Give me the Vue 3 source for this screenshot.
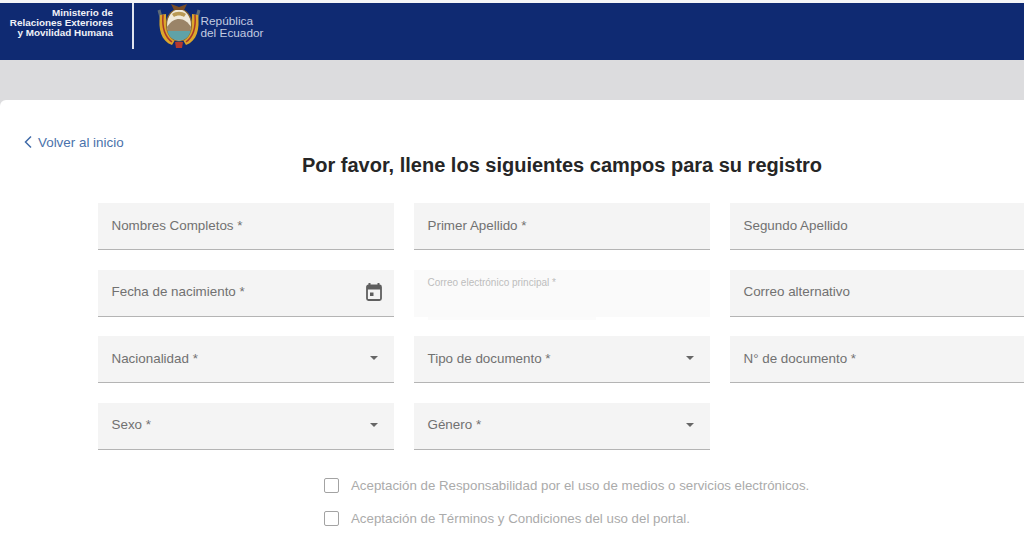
<script setup>
const fields = [
  { label: 'Nombres Completos *' },
  { label: 'Primer Apellido *' },
  { label: 'Segundo Apellido' },
  { label: 'Fecha de nacimiento *', icon: 'date' },
  { label: 'Correo electrónico principal *', disabled: true },
  { label: 'Correo alternativo' },
  { label: 'Nacionalidad *', icon: 'caret' },
  { label: 'Tipo de documento *', icon: 'caret' },
  { label: 'N° de documento *' },
  { label: 'Sexo *', icon: 'caret' },
  { label: 'Género *', icon: 'caret' },
]
const checks = [
  'Aceptación de Responsabilidad por el uso de medios o servicios electrónicos.',
  'Aceptación de Términos y Condiciones del uso del portal.',
]
</script>

<template>
  <div class="page">
    <header class="topbar">
      <div class="ministry">Ministerio de<br />Relaciones Exteriores<br />y Movilidad Humana</div>
      <div class="divider"></div>
      <svg class="crest" width="44" height="50" viewBox="0 0 44 50">
        <path d="M2 9 L6 24 M42 9 L38 24" stroke="#5d6b78" stroke-width="3" fill="none" />
        <path d="M3 14 C1 28 4 40 15 44 L18 39 C11 34 9 24 9 13 Z" fill="#dca72b" />
        <path d="M41 14 C43 28 40 40 29 44 L26 39 C33 34 35 24 35 13 Z" fill="#dca72b" />
        <path d="M6 14 C5 26 8 36 15 41" stroke="#a8352c" stroke-width="1.5" fill="none" />
        <path d="M38 14 C39 26 36 36 29 41" stroke="#a8352c" stroke-width="1.5" fill="none" />
        <ellipse cx="22" cy="24" rx="12.5" ry="16" fill="#efe9da" stroke="#8d6a32" stroke-width="1.2" />
        <path d="M10 26 C14 20 18 18 22 18 C27 18 31 21 34 26 L33 31 H11 Z" fill="#9a8468" />
        <path d="M10.5 30 H33.5 C32 36 28 39.5 22 39.5 C16 39.5 12 36 10.5 30 Z" fill="#5fa2a8" />
        <path d="M15 13 C19 10 25 10 29 13 L27 16 C24 14 20 14 17 16 Z" fill="#b99a55" />
        <path d="M14 3 L22 6 L30 3 L27 9 H17 Z" fill="#7a4d25" />
        <path d="M18 41 H26 L25 47 H19 Z" fill="#b5392f" />
      </svg>
      <div class="republic">República<br />del Ecuador</div>
    </header>

    <div class="band"></div>

    <main class="card">
      <a class="back">
        <svg width="10" height="14" viewBox="0 0 10 14"><path d="M8 1.5 L2.5 7 L8 12.5" fill="none" stroke="#3f6aa8" stroke-width="1.5" /></svg>
        <span>Volver al inicio</span>
      </a>
      <h1>Por favor, llene los siguientes campos para su registro</h1>

      <div class="grid">
        <div v-for="f in fields" :key="f.label" class="field" :class="{ disabled: f.disabled }">
          <span class="label">{{ f.label }}</span>
          <svg v-if="f.icon === 'date'" class="date" width="18" height="20" viewBox="0 0 18 20">
            <path d="M4.5 1 V4 M13.5 1 V4" stroke="#5f5f5f" stroke-width="2" />
            <rect x="2" y="3.5" width="14" height="14.5" rx="1.5" fill="none" stroke="#5f5f5f" stroke-width="1.8" />
            <rect x="2" y="3.5" width="14" height="4" fill="#5f5f5f" />
            <rect x="5" y="10.5" width="3.5" height="3.5" fill="#5f5f5f" />
          </svg>
          <span v-if="f.icon === 'caret'" class="caret"></span>
          <span v-if="f.disabled" class="smudge"></span>
        </div>
      </div>

      <div class="checks">
        <label v-for="c in checks" :key="c" class="check">
          <span class="box"></span>
          <span>{{ c }}</span>
        </label>
      </div>
    </main>
  </div>
</template>

<style>
html, body { margin: 0; overflow: hidden; background: #fff; }
</style>

<style scoped>
.page {
  width: 1024px;
  height: 536px;
  overflow: hidden;
  padding-top: 3px;
  box-sizing: border-box;
  font-family: "Liberation Sans", Arial, sans-serif;
  background: linear-gradient(#f4f5f7 0 3px, #dcdcde 3px);
}
.topbar {
  box-sizing: border-box;
  height: 57px;
  background: #0f2a72;
  display: flex;
  align-items: flex-start;
  color: #fff;
}
.ministry {
  width: 113px;
  margin-top: 5px;
  text-align: right;
  font-size: 9.9px;
  line-height: 10px;
  font-weight: 700;
  color: #f0f2f8;
  white-space: nowrap;
}
.divider { width: 1.5px; height: 46px; margin-left: 19px; background: #dfe4ef; }
.crest { margin-left: 23px; margin-top: -2px; flex: none; }
.republic {
  margin-left: 0;
  margin-top: 12px;
  font-size: 11.8px;
  line-height: 12px;
  color: #c3cbe0;
}
.band { height: 40px; }
.card {
  height: 440px;
  background: #fff;
  border-radius: 6px 0 0 0;
  padding-top: 34px;
  box-sizing: border-box;
}
.back {
  display: flex;
  align-items: center;
  gap: 5px;
  margin-left: 23px;
  height: 16px;
  font-size: 13.4px;
  color: #4a72ab;
}
h1 {
  margin: 0;
  padding-left: 100px;
  height: 30px;
  text-align: center;
  font-size: 20px;
  line-height: 30px;
  font-weight: 700;
  color: #262626;
  white-space: nowrap;
}
.grid {
  display: grid;
  grid-template-columns: repeat(3, 296px);
  column-gap: 20px;
  row-gap: 19.5px;
  margin: 23px 0 0 98px;
  width: 960px;
}
.field {
  box-sizing: border-box;
  height: 47px;
  background: #f4f4f4;
  border-bottom: 1.5px solid #b4b4b4;
  padding: 0 14px 2px 13.5px;
  display: flex;
  align-items: center;
  justify-content: space-between;
  position: relative;
  font-size: 13.4px;
  color: #717171;
}
.field.disabled {
  background: #fafafa;
  border-bottom: none;
  align-items: flex-start;
  padding-top: 7px;
  font-size: 10px;
  color: #bdbdbd;
}
.smudge {
  position: absolute;
  left: 14px;
  top: 47px;
  width: 168px;
  height: 3px;
  background: #fbfbfb;
}
.date { margin-right: -3px; }
.caret {
  width: 0;
  height: 0;
  margin-right: 2px;
  border-left: 4.5px solid transparent;
  border-right: 4.5px solid transparent;
  border-top: 4.5px solid #666;
}
.checks {
  margin: 26px 0 0 324px;
  display: flex;
  flex-direction: column;
  gap: 14.5px;
}
.check {
  display: flex;
  align-items: center;
  gap: 12px;
  height: 19px;
  font-size: 13.3px;
  color: #ababab;
  white-space: nowrap;
}
.box {
  box-sizing: border-box;
  width: 15px;
  height: 15px;
  border: 1.5px solid #a3a3a3;
  border-radius: 2px;
}
</style>
